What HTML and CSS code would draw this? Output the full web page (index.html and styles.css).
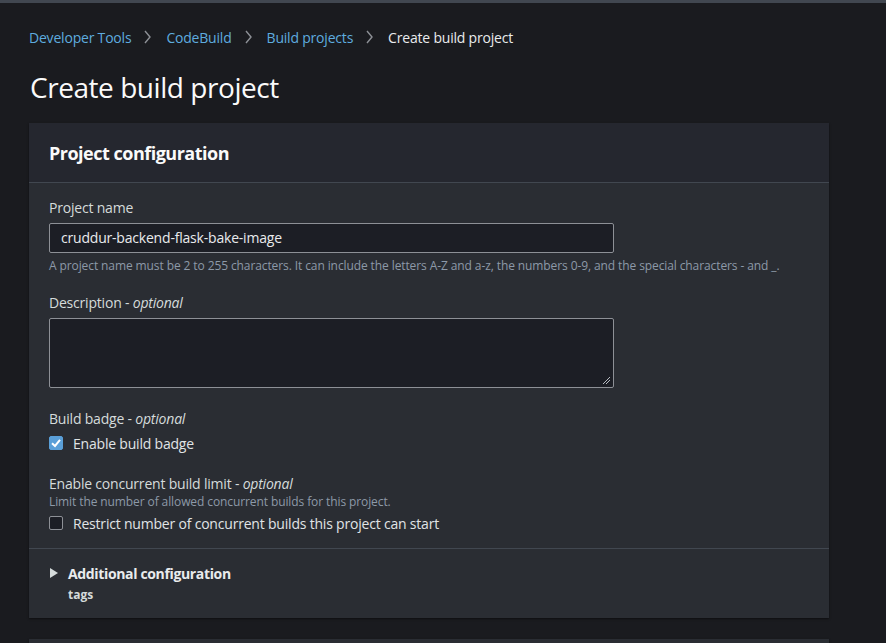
FILE: index.html
```html
<!DOCTYPE html>
<html lang="en">
<head>
<meta charset="utf-8">
<title>Create build project</title>
<link rel="stylesheet" href="styles.css">
</head>
<body>
<div class="topbar"></div>
<main class="main">
  <nav class="crumbs">
    <a class="crumb-link">Developer Tools</a>
    <svg class="chev" width="7" height="14" viewBox="0 0 7 14"><polyline points="1,1 6,7 1,13" fill="none" stroke="#8d9096" stroke-width="1.4"/></svg>
    <a class="crumb-link">CodeBuild</a>
    <svg class="chev" width="7" height="14" viewBox="0 0 7 14"><polyline points="1,1 6,7 1,13" fill="none" stroke="#8d9096" stroke-width="1.4"/></svg>
    <a class="crumb-link">Build projects</a>
    <svg class="chev" width="7" height="14" viewBox="0 0 7 14"><polyline points="1,1 6,7 1,13" fill="none" stroke="#8d9096" stroke-width="1.4"/></svg>
    <span class="crumb-current">Create build project</span>
  </nav>
  <h1 class="page-title">Create build project</h1>

  <section class="panel">
    <header class="panel-head">
      <h2 class="panel-title">Project configuration</h2>
    </header>
    <div class="panel-body">
      <div class="field">
        <label class="label">Project name</label>
        <div class="input">cruddur-backend-flask-bake-image</div>
        <div class="hint">A project name must be 2 to 255 characters. It can include the letters A-Z and a-z, the numbers 0-9, and the special characters - and _.</div>
      </div>
      <div class="field">
        <label class="label">Description - <i>optional</i></label>
        <div class="textarea">
          <svg class="grip" width="9" height="9" viewBox="0 0 9 9"><line x1="1" y1="8" x2="8" y2="1" stroke="#b8bcc2" stroke-width="1"/><line x1="4" y1="8" x2="8" y2="4" stroke="#b8bcc2" stroke-width="1"/></svg>
        </div>
      </div>
      <div class="field field-badge">
        <label class="label">Build badge - <i>optional</i></label>
        <div class="check-row">
          <span class="box checked"><svg width="14" height="14" viewBox="0 0 14 14"><polyline points="3,7.2 6,10 11,3.8" fill="none" stroke="#ffffff" stroke-width="2"/></svg></span>
          <span class="check-label">Enable build badge</span>
        </div>
      </div>
      <div class="field field-limit">
        <label class="label">Enable concurrent build limit - <i>optional</i></label>
        <div class="hint tight">Limit the number of allowed concurrent builds for this project.</div>
        <div class="check-row small-gap">
          <span class="box"></span>
          <span class="check-label">Restrict number of concurrent builds this project can start</span>
        </div>
      </div>
    </div>
    <div class="panel-foot">
      <div class="expander">
        <svg class="caret" width="10" height="12" viewBox="0 0 10 12"><polygon points="1,1 9,6 1,11" fill="#d5dbdb"/></svg>
        <span class="exp-title">Additional configuration</span>
      </div>
      <div class="exp-sub">tags</div>
    </div>
  </section>
  <section class="panel next"></section>
</main>
</body>
</html>
```
FILE: styles.css
```css
* { box-sizing: border-box; }
html, body { margin: 0; padding: 0; }
body {
  background: #1a1b1f;
  color: #d5dbdb;
  font-family: "Open Sans", "Noto Sans", sans-serif;
  width: 886px;
  height: 643px;
  overflow: hidden;
}
.topbar { height: 3px; background: #414750; }
.main { padding: 0 57px 0 29px; }

.crumbs {
  display: flex;
  align-items: center;
  margin-top: 24px;
  height: 20px;
  font-size: 14px;
  letter-spacing: -0.2px;
}
.crumb-link { color: #5eacdf; }
.crumb-current { color: #e9ebed; }
.chev { margin: 0 15px 0 13px; flex: none; }

.page-title {
  margin: 22px 0 0 1px;
  font-size: 28px;
  line-height: 36px;
  font-weight: 400;
  letter-spacing: -0.45px;
  color: #fafafa;
}

.panel {
  margin-top: 18px;
  width: 800px;
  background: #2a2d33;
  box-shadow: 0 1px 2px rgba(0,0,0,0.5);
}
.panel-head {
  background: #25272f;
  height: 60px;
  padding: 0 20px;
  display: flex;
  align-items: center;
  border-bottom: 1px solid #414750;
}
.panel-title {
  margin: 0;
  font-size: 18px;
  font-weight: 700;
  letter-spacing: -0.5px;
  color: #fafafa;
}
.panel-body {
  padding: 15px 20px 15px;
  display: flex;
  flex-direction: column;
  gap: 19px;
  border-bottom: 1px solid #414750;
}
.field { display: flex; flex-direction: column; }
.field-badge { margin-top: 2px; }
.field-limit { margin-top: 2px; }
.label { font-size: 14px; line-height: 20px; color: #d5dbdb; letter-spacing: -0.2px; }
.label i { font-style: italic; }
.input {
  margin-top: 5px;
  width: 565px;
  height: 30px;
  background: #1c1e25;
  border: 1px solid #8d9096;
  border-radius: 2px;
  padding: 0 11px;
  font-size: 14px;
  line-height: 28px;
  letter-spacing: -0.2px;
  color: #e9ebed;
}
.hint { margin-top: 5px; font-size: 12px; line-height: 16px; color: #8d99a8; letter-spacing: -0.1px; }
.hint.tight { margin-top: 0; }
.textarea {
  margin-top: 5px;
  width: 565px;
  height: 70px;
  background: #1c1e25;
  border: 1px solid #8d9096;
  border-radius: 2px;
  display: flex;
  justify-content: flex-end;
  align-items: flex-end;
  padding: 0 2px 2px 0;
}
.check-row {
  margin-top: 4px;
  display: flex;
  align-items: center;
  height: 20px;
}
.check-row.small-gap { margin-top: 3px; }
.box {
  width: 14px;
  height: 14px;
  border: 1px solid #8d9096;
  border-radius: 2px;
  background: #1c1e25;
  margin-right: 10px;
  display: flex;
  align-items: center;
  justify-content: center;
  flex: none;
}
.box.checked { background: #5a9fd8; border-color: #5a9fd8; }
.box svg { flex: none; }
.check-label { font-size: 14px; color: #e0e4e6; letter-spacing: -0.2px; }

.panel-foot { padding: 14px 20px 15px; }
.expander { display: flex; align-items: center; height: 20px; }
.caret { margin-right: 9px; flex: none; }
.exp-title { font-size: 14px; font-weight: 700; color: #e9ebed; letter-spacing: -0.35px; }
.exp-sub { margin-left: 19px; margin-top: 4px; font-size: 12px; line-height: 16px; font-weight: 700; color: #d5dbdb; }

.panel.next { margin-top: 21px; height: 40px; }
```
